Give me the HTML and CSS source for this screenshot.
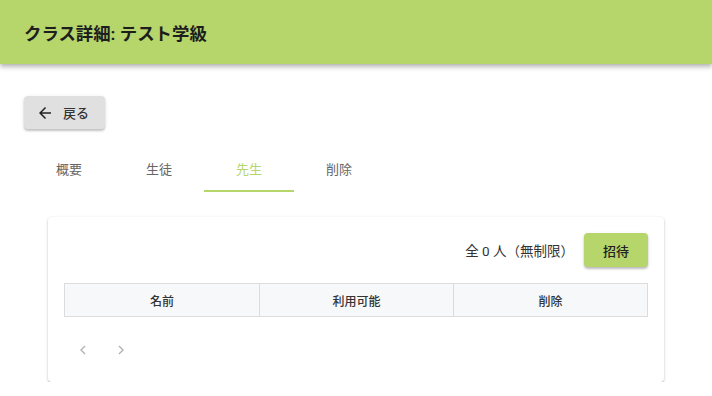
FILE: index.html
```html
<!DOCTYPE html>
<html lang="ja">
<head>
<meta charset="utf-8">
<link rel="stylesheet" href="styles.css">
</head>
<body>
<header class="appbar"><h1 class="title">クラス詳細: テスト学級</h1></header>
<main class="main">
  <button class="back-btn">
    <svg class="back-icon" viewBox="0 0 24 24" width="18" height="18"><path d="M20 11H7.83l5.59-5.59L12 4l-8 8 8 8 1.41-1.41L7.83 13H20v-2z" fill="#222"/></svg>
    <span>戻る</span>
  </button>
  <nav class="tabs">
    <div class="tab">概要</div>
    <div class="tab">生徒</div>
    <div class="tab active">先生</div>
    <div class="tab">削除</div>
  </nav>
  <section class="card">
    <div class="card-top">
      <span class="count">全 0 人（無制限）</span>
      <button class="invite-btn">招待</button>
    </div>
    <div class="table">
      <div class="th">名前</div>
      <div class="th">利用可能</div>
      <div class="th">削除</div>
    </div>
    <div class="pager">
      <svg viewBox="0 0 10 14" width="10" height="14"><path d="M7 3L3 7l4 4" fill="none" stroke="#b0b0b0" stroke-width="1.3"/></svg>
      <svg viewBox="0 0 10 14" width="10" height="14"><path d="M3 3l4 4-4 4" fill="none" stroke="#b0b0b0" stroke-width="1.3"/></svg>
    </div>
  </section>
</main>
</body>
</html>
```
FILE: styles.css
```css
* { box-sizing: border-box; }
body {
  margin: 0;
  font-family: Roboto, "Noto Sans CJK JP", sans-serif;
  background: #fff;
  color: #222;
}
.appbar {
  height: 64px;
  background: #b6d56b;
  display: flex;
  align-items: center;
  padding: 0 24px;
  box-shadow: 0 2px 4px rgba(0,0,0,0.2), 0 4px 5px rgba(0,0,0,0.12);
}
.title {
  margin: 0;
  font-size: 17.4px;
  font-weight: 700;
  color: #1d1d1d;
}
.main {
  padding: 32px 24px 0;
}
.back-btn {
  display: flex;
  align-items: center;
  gap: 9px;
  height: 33px;
  width: 81px;
  padding: 0 0 0 12px;
  border: none;
  border-radius: 4px;
  background: #e0e0e0;
  font-family: inherit;
  font-size: 13px;
  font-weight: 500;
  color: #333;
  box-shadow: 0 2px 2px rgba(0,0,0,0.18), 0 1px 4px rgba(0,0,0,0.1);
}
.back-icon { flex: none; }
.tabs {
  display: flex;
  margin-top: 15px;
  height: 48px;
}
.tab {
  width: 90px;
  display: flex;
  align-items: center;
  justify-content: center;
  font-size: 13px;
  font-weight: 400;
  color: #666;
  border-bottom: 2px solid transparent;
  padding-top: 2px;
}
.tab.active {
  color: #b6d56b;
  border-bottom-color: #b6d56b;
}
.card {
  margin: 25px 24px 0;
  width: 616px;
  height: 165px;
  border-radius: 4px;
  background: #fff;
  box-shadow: 0 1px 3px rgba(0,0,0,0.22), 0 1px 1px rgba(0,0,0,0.12);
  padding: 16px;
}
.card-top {
  display: flex;
  justify-content: flex-end;
  align-items: center;
  gap: 10px;
  height: 34px;
}
.count {
  font-size: 13.5px;
  color: #333;
}
.invite-btn {
  width: 64px;
  height: 34px;
  border: none;
  border-radius: 4px;
  background: #b6d56b;
  font-family: inherit;
  font-size: 13px;
  font-weight: 500;
  color: #222;
  box-shadow: 0 2px 2px rgba(0,0,0,0.2), 0 1px 4px rgba(0,0,0,0.1);
}
.table {
  margin-top: 16px;
  display: grid;
  grid-template-columns: 1fr 1fr 1fr;
  border: 1px solid #dcdcdc;
  background: #f7f8fa;
  height: 34px;
}
.th {
  display: flex;
  align-items: center;
  justify-content: center;
  font-size: 12px;
  font-weight: 500;
  color: #333;
}
.th + .th { border-left: 1px solid #dcdcdc; }
.pager {
  display: flex;
  gap: 28px;
  padding: 26px 0 0 14px;
}
```
